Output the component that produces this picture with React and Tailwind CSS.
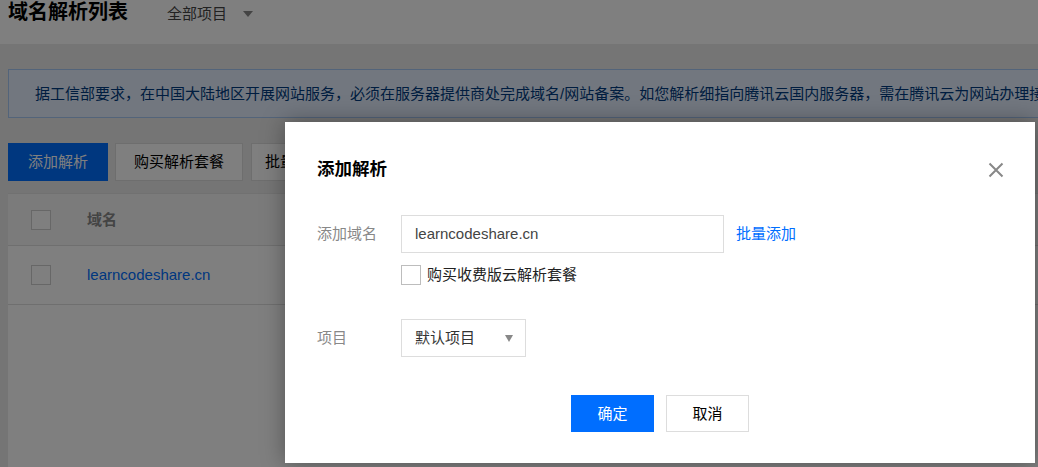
import React from "react";

const FONT = { fontFamily: '"Liberation Sans", "Noto Sans CJK SC", sans-serif' };

function Checkbox({ className = "" }) {
  return <span className={`block w-[20px] h-[20px] border bg-white shrink-0 ${className}`} />;
}

export default function App() {
  return (
    <div className="relative w-[1038px] h-[467px] overflow-hidden bg-[#ebebeb]" style={FONT}>
      {/* Page underneath */}
      <div className="w-[1200px]">
        <div className="h-[44px] bg-white flex items-start pl-2">
          <div className="text-[20px] leading-[24px] font-bold text-[#000]">域名解析列表</div>
          <div className="ml-[39px] mt-[4px] text-[15px] leading-[20px] text-[#444]">全部项目</div>
          <div className="ml-[16px] mt-[11px] w-0 h-0 border-l-[5px] border-r-[5px] border-t-[6px] border-l-transparent border-r-transparent border-t-[#888]" />
        </div>

        <div className="px-2">
          <div className="mt-[25px] h-[49px] border border-[#a6c8f5] bg-[#e4effe] flex items-center pl-[26px]">
            <span className="text-[15px] leading-[20px] text-[#003b80] whitespace-nowrap">
              据工信部要求，在中国大陆地区开展网站服务，必须在服务器提供商处完成域名/网站备案。如您解析细指向腾讯云国内服务器，需在腾讯云为网站办理接入备案。
            </span>
          </div>

          <div className="mt-[25px] flex">
            <button className="w-[100px] h-[38px] bg-[#006eff] text-white text-[15px] leading-[20px]">添加解析</button>
            <button className="ml-[7px] w-[128px] h-[38px] bg-white border border-[#dcdcdc] text-[#000] text-[15px] leading-[20px]">购买解析套餐</button>
            <button className="ml-[8px] w-[120px] h-[38px] bg-white border border-[#dcdcdc] text-[#000] text-[15px] leading-[20px] text-left pl-[13px]">批量操作</button>
          </div>

          <div className="mt-[12px] bg-white border-t border-[#e2e2e2] h-[300px]">
            <div className="h-[52px] border-b border-[#dedede] bg-[#f6f6f6] flex items-center pl-[23px]">
              <Checkbox className="border-[#cfcfcf]" />
              <span className="ml-[36px] text-[15px] leading-[20px] font-bold text-[#888]">域名</span>
              <span className="ml-auto mr-[170px] text-[15px] leading-[20px] font-bold text-[#888]">操作</span>
            </div>
            <div className="h-[59px] border-b border-[#dedede] flex items-center pl-[23px]">
              <Checkbox className="border-[#cfcfcf]" />
              <span className="ml-[36px] text-[15px] leading-[20px] text-[#006eff]">learncodeshare.cn</span>
              <span className="ml-auto mr-[160px] text-[15px] leading-[20px] text-[#e54545]">(暂停)</span>
            </div>
          </div>
        </div>
      </div>

      {/* Mask */}
      <div className="absolute inset-0 bg-black/50" />

      {/* Dialog */}
      <div className="absolute left-[285px] top-[122px] w-[750px] h-[341px] bg-white shadow-[0_0_22px_rgba(0,0,0,0.35)] pl-[32px] pt-[35px]">
        <button className="absolute right-[31px] top-[40px] w-[16px] h-[16px]" aria-label="关闭">
          <svg width="16" height="16" viewBox="0 0 16 16">
            <path d="M1.5 1.5 L14.5 14.5 M14.5 1.5 L1.5 14.5" stroke="#888" strokeWidth="2" fill="none" />
          </svg>
        </button>

        <div className="text-[17.5px] leading-[24px] font-bold text-[#000]">添加解析</div>

        <div className="mt-[34px] flex items-center">
          <div className="w-[84px] text-[15px] leading-[38px] text-[#888]">添加域名</div>
          <div className="w-[323px] h-[38px] border border-[#dddddd] flex items-center pl-[13px] text-[15px] text-[#444]">
            learncodeshare.cn
          </div>
          <span className="ml-[12px] text-[15px] leading-[38px] text-[#006eff]">批量添加</span>
        </div>

        <div className="mt-[12px] ml-[84px] flex items-center">
          <Checkbox className="border-[#bdbdbd]" />
          <span className="ml-[6px] text-[15px] leading-[20px] text-[#222]">购买收费版云解析套餐</span>
        </div>

        <div className="mt-[34px] flex items-center">
          <div className="w-[84px] text-[15px] leading-[38px] text-[#888]">项目</div>
          <div className="w-[125px] h-[38px] border border-[#dddddd] flex items-center pl-[13px] pr-[12px] text-[15px] text-[#333]">
            <span>默认项目</span>
            <span className="ml-auto w-0 h-0 border-l-[4.5px] border-r-[4.5px] border-t-[7px] border-l-transparent border-r-transparent border-t-[#888]" />
          </div>
        </div>

        <div className="mt-[38px] -ml-[32px] flex justify-center gap-[12px]">
          <button className="w-[83px] h-[37px] bg-[#006eff] text-white text-[15px] leading-[20px]">确定</button>
          <button className="w-[83px] h-[37px] bg-white border border-[#dddddd] text-[#000] text-[15px] leading-[20px]">取消</button>
        </div>
      </div>
    </div>
  );
}
